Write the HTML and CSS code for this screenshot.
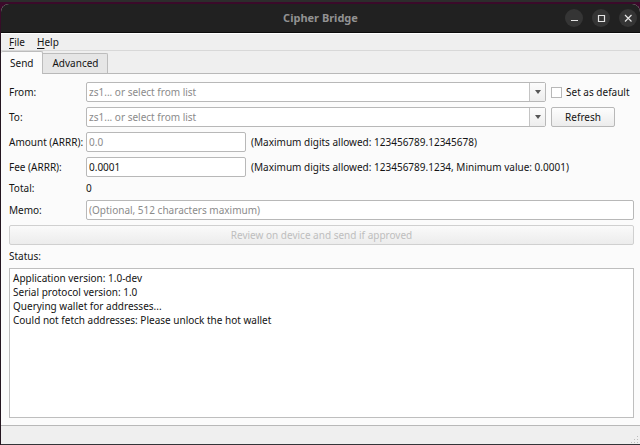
FILE: index.html
```html
<!DOCTYPE html>
<html lang="en">
<head>
<meta charset="utf-8">
<title>Cipher Bridge</title>
<link rel="stylesheet" href="styles.css">
</head>
<body>
<div class="window">
  <header class="titlebar">
    <h1 class="title">Cipher Bridge</h1>
    <div class="window-controls">
      <button class="window-button" type="button" aria-label="Minimize"><svg viewBox="0 0 18 18" aria-hidden="true"><path d="M6 11.5h7"/></svg></button>
      <button class="window-button" type="button" aria-label="Maximize"><svg viewBox="0 0 18 18" aria-hidden="true"><path d="M6.5 6.5h6v6h-6z"/></svg></button>
      <button class="window-button" type="button" aria-label="Close"><svg viewBox="0 0 18 18" aria-hidden="true"><path d="M6 6l6.500 6.500M12.500 6l-6.500 6.500"/></svg></button>
    </div>
  </header>
  <nav class="menubar">
    <button class="menu" type="button"><u>F</u>ile</button>
    <button class="menu" type="button"><u>H</u>elp</button>
  </nav>
  <div class="tabs" role="tablist">
    <button class="tab tab-active" type="button" role="tab" aria-selected="true">Send</button>
    <button class="tab" type="button" role="tab" aria-selected="false">Advanced</button>
  </div>
  <main class="panel">
    <form class="form">
      <label for="from">From:</label>
      <div class="row">
        <div class="combo">
          <input class="combo-input" id="from" type="text" placeholder="zs1... or select from list">
          <button class="combo-arrow" type="button" aria-label="Show from addresses"><svg viewBox="0 0 8 4" aria-hidden="true"><path d="M1 0h6L4 4z"/></svg></button>
        </div>
        <div class="side"><input class="check" id="default" type="checkbox"><label for="default">Set as default</label></div>
      </div>
      <label for="to">To:</label>
      <div class="row">
        <div class="combo">
          <input class="combo-input" id="to" type="text" placeholder="zs1... or select from list">
          <button class="combo-arrow" type="button" aria-label="Show to addresses"><svg viewBox="0 0 8 4" aria-hidden="true"><path d="M1 0h6L4 4z"/></svg></button>
        </div>
        <div class="side"><button class="button refresh" type="button">Refresh</button></div>
      </div>
      <label for="amount">Amount (ARRR):</label>
      <div class="row">
        <input class="field number" id="amount" type="text" placeholder="0.0">
        <span>(Maximum digits allowed: 123456789.12345678)</span>
      </div>
      <label for="fee">Fee (ARRR):</label>
      <div class="row">
        <input class="field number" id="fee" type="text" value="0.0001">
        <span>(Maximum digits allowed: 123456789.1234, Minimum value: 0.0001)</span>
      </div>
      <span>Total:</span>
      <output>0</output>
      <label for="memo">Memo:</label>
      <input class="field" id="memo" type="text" placeholder="(Optional, 512 characters maximum)">
    </form>
    <button class="button" type="button" disabled>Review on device and send if approved</button>
    <label for="status">Status:</label>
    <textarea class="status" id="status" readonly>Application version: 1.0-dev
Serial protocol version: 1.0
Querying wallet for addresses...
Could not fetch addresses: Please unlock the hot wallet</textarea>
  </main>
  <footer class="statusbar"><svg class="grip" viewBox="0 0 8 8" aria-hidden="true"><path d="M6 0h1v1H6zM3 3h1v1H3zM6 3h1v1H6zM0 6h1v1H0zM3 6h1v1H3zM6 6h1v1H6z"/></svg></footer>
</div>
</body>
</html>
```
FILE: styles.css
```css
* {
  box-sizing: border-box;
}

body {
  margin: 0;
  height: 100vh;
  padding: 4px 0 0 1px;
  background: linear-gradient(#2c2c2c 2px, #3b0a2a 2px, #3b0a2a 20px, #241620 40px);
  color: #141414;
  font: 10px/13px "Noto Sans", sans-serif;
}

button,
input,
textarea {
  margin: 0;
  color: inherit;
  font: inherit;
}

.window {
  display: flex;
  flex-direction: column;
  height: 100%;
  overflow: hidden;
  border-bottom: 1px solid #343438;
  border-radius: 8px 8px 0 0;
  background: #efefef;
}

.titlebar {
  display: grid;
  grid-template-columns: 1fr auto 1fr;
  align-items: center;
  height: 29px;
  border-bottom: 1px solid #0c0c0c;
  background: #212121;
}

.title {
  grid-column: 2;
  margin: 0;
  color: #929292;
  font: bold 11px/14px "Noto Sans", sans-serif;
}

.window-controls {
  display: flex;
  justify-content: flex-end;
  gap: 9px;
  padding-right: 3px;
}

.window-button {
  width: 18px;
  height: 18px;
  padding: 0;
  border: 0;
  border-radius: 50%;
  background: #353535;
}

.window-button svg {
  display: block;
  fill: none;
  stroke: #e4e4e4;
  stroke-width: 1.2;
}

.menubar {
  display: flex;
  gap: 12px;
  height: 18px;
  padding: 0 8px;
  border-top: 1px solid #fff;
  border-bottom: 1px solid #d8d8d8;
}

.menu {
  padding: 0;
  border: 0;
  background: none;
}

.menu u {
  text-underline-offset: 2px;
}

.tabs {
  display: flex;
  align-items: flex-end;
  height: 22px;
}

.tab {
  height: 20px;
  padding: 0 9px;
  border: 1px solid #bcbcbc;
  border-left: 0;
  border-bottom: 0;
  border-radius: 0 2px 0 0;
  background: #e6e6e6;
}

.tab-active {
  z-index: 1;
  height: 23px;
  margin-bottom: -1px;
  border-radius: 2px 2px 0 0;
  background: #fbfbfb;
}

.panel {
  display: flex;
  flex: 1;
  flex-direction: column;
  gap: 5px;
  padding: 8px 6px 7px 8px;
  border: solid #b8b8b8;
  border-width: 1px 0;
  background: #fbfbfb;
}

.form {
  display: grid;
  grid-template-columns: 72px 1fr;
  grid-template-rows: repeat(4, 20px) 13px 20px;
  gap: 5px;
  align-items: center;
  white-space: nowrap;
}

.row {
  display: flex;
  gap: 5px;
  align-items: center;
}

.field,
.combo {
  width: 100%;
  height: 20px;
  border: 1px solid #b8b8b8;
  border-radius: 2px;
  background: #fff;
}

.field {
  padding: 0 2px;
}

.number {
  width: 160px;
}

.combo {
  display: flex;
  flex: 1;
}

.combo-input {
  flex: 1;
  min-width: 0;
  padding: 0 2px;
  border: 0;
  background: none;
}

.combo-arrow {
  display: grid;
  place-items: center;
  width: 16px;
  padding: 0;
  border: 0;
  border-left: 1px solid #c4c4c4;
  background: linear-gradient(#fcfcfc, #ededed);
}

.combo-arrow svg {
  width: 8px;
  height: 4px;
  fill: #555;
}

::placeholder {
  color: #8b8b8b;
  opacity: 1;
}

.side {
  display: flex;
  align-items: center;
  gap: 4px;
  width: 83px;
}

.check {
  width: 11px;
  height: 11px;
  border: 1px solid #b8b8b8;
  background: #fff;
  appearance: none;
}

.button {
  height: 20px;
  padding: 0;
  border: 1px solid #b8b8b8;
  border-radius: 2px;
  background: linear-gradient(#fdfdfd, #ececec);
}

.button:disabled {
  border-color: #d0d0d0;
  background: linear-gradient(#fafafa, #ececec);
  color: #bebebe;
}

.refresh {
  width: 64px;
}

.status {
  flex: 1;
  padding: 2px 3px;
  border: 1px solid #bebebe;
  background: #fff;
  line-height: 14px;
  resize: none;
}

.statusbar {
  display: flex;
  align-items: flex-end;
  justify-content: flex-end;
  height: 18px;
  padding-right: 1px;
}

.grip {
  width: 8px;
  height: 8px;
  fill: #bdbdbd;
}
```
